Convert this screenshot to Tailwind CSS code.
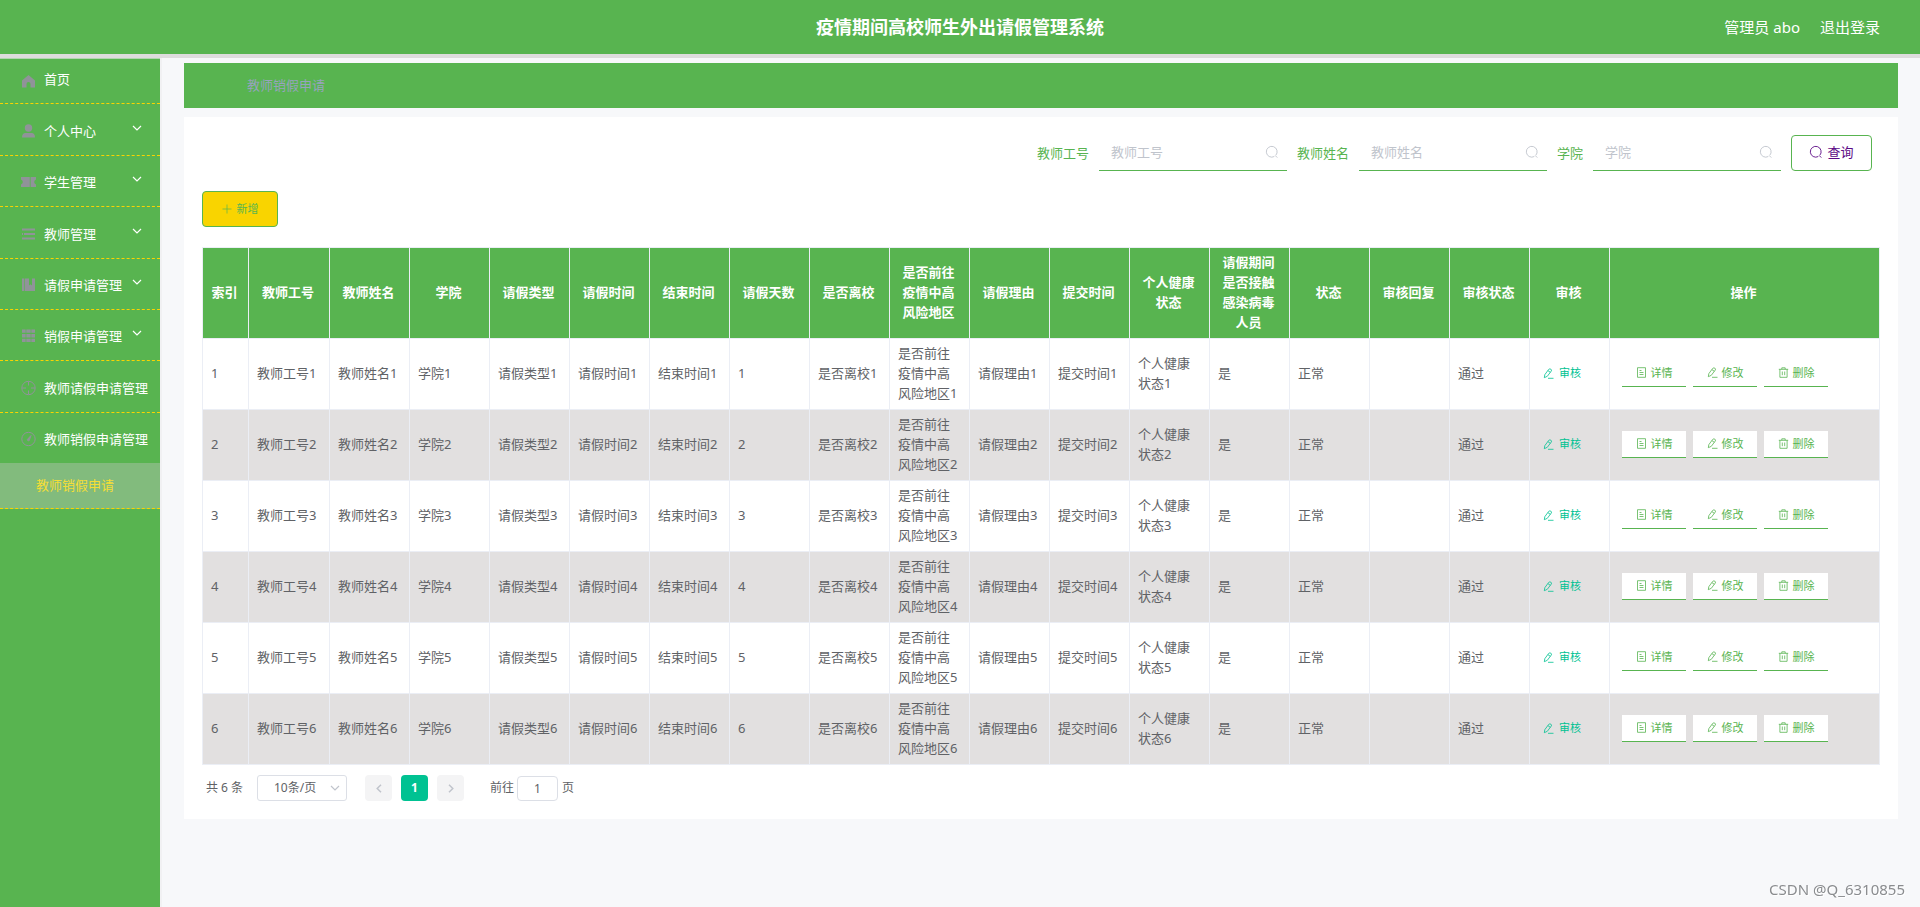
<!DOCTYPE html>
<html lang="zh-CN">
<head>
<meta charset="utf-8">
<title>疫情期间高校师生外出请假管理系统</title>
<script src="https://cdn.jsdelivr.net/npm/@tailwindcss/browser@4"></script>
</head>
<body class="flex min-h-screen flex-col bg-[#f7f8fa] font-['Noto_Sans','Noto_Sans_CJK_SC',sans-serif] text-[13px] leading-5 text-[#606266]">

<svg class="hidden" aria-hidden="true">
  <symbol id="i-search" viewBox="0 0 14 14"><path d="M9.300 11.500A5.400 5.400 0 1 1 10.800 10.300M10.300 10.600l2 2" fill="none" stroke="currentColor" stroke-width=".9"/></symbol>
  <symbol id="i-down" viewBox="0 0 10 6"><path d="M1 1l4 4 4-4" fill="none" stroke="currentColor" stroke-width="1.200"/></symbol>
  <symbol id="i-plus" viewBox="0 0 10 10"><path d="M5 .5v9M.5 5h9" fill="none" stroke="currentColor" stroke-width=".7"/></symbol>
  <symbol id="i-edit" viewBox="0 0 11 11"><path d="M1.300 9.700l.5-3L5.700 1.400Q6.800.4 7.900 1.200T8.300 3L4.300 8.300zM4.900 2.600l2.400 1.700M5 10.300h5.500" fill="none" stroke="currentColor" stroke-width=".8"/></symbol>
  <symbol id="i-doc" viewBox="0 0 11 11"><path d="M1.500.7h8v9.600h-8zM3.500 3.500h2M3.500 5.500h4M3.500 7.500h4" fill="none" stroke="currentColor" stroke-width=".8"/></symbol>
  <symbol id="i-trash" viewBox="0 0 11 11"><path d="M.8 2.300h9.400M3.800 2.300V.8h3.400v1.500M1.900 2.300v8h7.200v-8M4.300 4.500v3.700M6.700 4.500v3.700" fill="none" stroke="currentColor" stroke-width=".8"/></symbol>
</svg>

<header class="grid h-[58px] grid-cols-[1fr_auto_1fr] items-center border-b-4 border-[#dedcdd] bg-[#58b450] text-white">
  <h1 class="col-start-2 text-lg font-bold">疫情期间高校师生外出请假管理系统</h1>
  <div class="flex justify-end gap-5 pr-10 text-[15px]">
    <span>管理员 abo</span>
    <a href="#">退出登录</a>
  </div>
</header>

<div class="flex flex-1">
  <aside class="w-40 shrink-0 border-t border-[#b3d6b0] bg-[#58b450] text-white shadow-[2px_0_0_#f1f1f3]">
    <nav>
      <a href="#" class="flex h-[45px] items-center gap-2 border-b border-dashed border-[#f9d400] pl-[21px]">
        <svg class="h-4 w-[15px] text-[#909399]" viewBox="0 0 15 15" fill="currentColor"><path d="M7.500 1.500L14 7v7H9.500v-3.500a2 2 0 0 0-4 0V14H1V7z"/></svg><span class="pb-1">首页</span></a>
      <a href="#" class="flex h-[52px] items-center gap-2 border-b border-dashed border-[#f9d400] pt-[2px] pl-[21px] pr-[18px]">
        <svg class="h-4 w-[15px] text-[#909399]" viewBox="0 0 15 15" fill="currentColor"><circle cx="7.500" cy="4.500" r="3.700"/><path d="M1 14q0-4.500 3.500-4.500h6Q14 9.500 14 14z"/></svg><span class="flex-1">个人中心</span><svg class="mb-[6px] h-[6px] w-[10px]"><use href="#i-down"/></svg></a>
      <a href="#" class="flex h-[51px] items-center gap-2 border-b border-dashed border-[#f9d400] pt-[2px] pl-[21px] pr-[18px]">
        <svg class="h-4 w-[15px] text-[#909399]" viewBox="0 0 15 15" fill="currentColor"><path d="M0 2.500h8.800v10H0V10q1.800-.6 1.800-2.500T0 5zM9.600 2.500H15V5q-1.800.6-1.800 2.500T15 10v2.500H9.600z"/></svg><span class="flex-1">学生管理</span><svg class="mb-[6px] h-[6px] w-[10px]"><use href="#i-down"/></svg></a>
      <a href="#" class="flex h-[52px] items-center gap-2 border-b border-dashed border-[#f9d400] pt-[2px] pl-[21px] pr-[18px]">
        <svg class="h-4 w-[15px] text-[#909399]" viewBox="0 0 15 15" fill="none" stroke="currentColor" stroke-width="1.800"><path d="M1 3h13M3 7.500h11M1 12h13M1 7.500h1"/></svg><span class="flex-1">教师管理</span><svg class="mb-[6px] h-[6px] w-[10px]"><use href="#i-down"/></svg></a>
      <a href="#" class="flex h-[51px] items-center gap-2 border-b border-dashed border-[#f9d400] pt-[2px] pl-[21px] pr-[18px]">
        <svg class="h-4 w-[15px] text-[#909399]" viewBox="0 0 15 15" fill="currentColor"><path d="M1 1h2v12.500H1zM3.600 1h4.400v7l1.500-1.300L11 8V1h3v12.500H3.600z"/></svg><span class="flex-1">请假申请管理</span><svg class="mb-[6px] h-[6px] w-[10px]"><use href="#i-down"/></svg></a>
      <a href="#" class="flex h-[51px] items-center gap-2 border-b border-dashed border-[#f9d400] pt-[2px] pl-[21px] pr-[18px]">
        <svg class="h-4 w-[15px] text-[#909399]" viewBox="0 0 15 15" fill="currentColor"><path d="M1 1h3.700v3.300H1zM5.300 1h4.400v3.300H5.300zM10.300 1H14v3.300h-3.700zM1 5.500h3.700v3.500H1zM5.300 5.500h4.400v3.500H5.300zM10.300 5.500H14v3.500h-3.700zM1 10.200h3.700v3.300H1zM5.300 10.200h4.400v3.300H5.300zM10.300 10.200H14v3.300h-3.700z"/></svg><span class="flex-1">销假申请管理</span><svg class="mb-[6px] h-[6px] w-[10px]"><use href="#i-down"/></svg></a>
      <a href="#" class="flex h-[52px] items-center gap-2 border-b border-dashed border-[#f9d400] pt-[2px] pl-[21px]">
        <svg class="h-4 w-[15px] text-[#909399]" viewBox="0 0 15 15" fill="none" stroke="currentColor"><circle cx="7.500" cy="7.500" r="6.700"/><path d="M7.500 1v4M7.500 10v4M1 7.500h4M10 7.500h4"/></svg>教师请假申请管理</a>
      <a href="#" class="flex h-[50px] items-center gap-2 pt-[2px] pl-[21px]">
        <svg class="h-4 w-[15px] text-[#909399]" viewBox="0 0 15 15" fill="none" stroke="currentColor"><circle cx="7.500" cy="7.500" r="6.700"/><path d="M10 4L8.300 9a1.200 1.200 0 0 1-2-1z" fill="currentColor"/></svg>教师销假申请管理</a>
      <a href="#" class="flex h-[46px] items-center border-b border-dashed border-[#f9d400] bg-[#82bb7d] pb-[2px] pl-9 text-[#f5de35]">教师销假申请</a>
    </nav>
  </aside>

  <main class="min-w-0 flex-1 pt-[5px] pr-[22px] pl-6">
    <div class="flex h-[45px] items-center bg-[#58b450] pb-[2px] pl-[63px] text-[#97a3be]">教师销假申请</div>

    <section class="mt-[9px] bg-white px-[18px] pt-[18px] pb-[18px]">
      <form class="flex items-center justify-end gap-[10px] pr-2 text-[#58b450]">
        <label for="q1">教师工号</label>
        <div class="relative w-[188px]"><input id="q1" placeholder="教师工号" class="block h-9 w-full border-b border-[#58b450] pr-8 pb-[2px] pl-3 placeholder:text-[#c0c4cc]"><svg class="absolute top-[10px] right-2 size-[14px] text-[#c0c4cc]"><use href="#i-search"/></svg></div>
        <label for="q2">教师姓名</label>
        <div class="relative w-[188px]"><input id="q2" placeholder="教师姓名" class="block h-9 w-full border-b border-[#58b450] pr-8 pb-[2px] pl-3 placeholder:text-[#c0c4cc]"><svg class="absolute top-[10px] right-2 size-[14px] text-[#c0c4cc]"><use href="#i-search"/></svg></div>
        <label for="q3">学院</label>
        <div class="relative w-[188px]"><input id="q3" placeholder="学院" class="block h-9 w-full border-b border-[#58b450] pr-8 pb-[2px] pl-3 placeholder:text-[#c0c4cc]"><svg class="absolute top-[10px] right-2 size-[14px] text-[#c0c4cc]"><use href="#i-search"/></svg></div>
        <button type="button" class="flex h-9 w-[81px] items-center justify-center gap-1 rounded border border-[#58b450] pb-[2px] text-[#5c0a86]"><svg class="size-[14px]"><use href="#i-search"/></svg>查询</button>
      </form>

      <button type="button" class="mt-5 flex h-9 w-[76px] items-center justify-center gap-[5px] rounded border border-[#58b450] bg-[#f9d400] text-[11px] text-[#58b450]"><svg class="size-[10px]"><use href="#i-plus"/></svg>新增</button>

      <table class="mt-5 w-full table-fixed border-separate border-spacing-0 border-t border-l border-[#ebeef5]">
        <colgroup><col class="w-[46px]"><col class="w-[81px]"><col class="w-20" span="16"><col class="w-[270px]"></colgroup>
        <thead><tr id="head" class="bg-[#58b450] text-white"></tr></thead>
        <tbody id="rows"></tbody>
      </table>

      <div class="flex items-center pt-[10px] pl-1 text-xs">
        <span class="w-[51px]">共 6 条</span>
        <div class="relative">
          <select aria-label="每页条数" class="block h-[26px] w-[90px] appearance-none rounded-[3px] border border-[#dcdfe6] bg-white pl-4"><option>10条/页</option></select>
          <svg class="pointer-events-none absolute top-[10px] right-[7px] h-[6px] w-[10px] text-[#c0c4cc]"><use href="#i-down"/></svg>
        </div>
        <button type="button" aria-label="上一页" class="ml-[18px] flex h-[26px] w-[27px] items-center justify-center rounded-sm bg-[#f4f4f5] text-[#c0c4cc]"><svg class="h-[9px] w-[6px]" viewBox="0 0 6 9"><path d="M5 .7L1.200 4.500 5 8.300" fill="none" stroke="currentColor" stroke-width="1.500"/></svg></button>
        <button type="button" class="ml-[9px] h-[26px] w-[27px] rounded-sm bg-[#00c292] font-bold text-white">1</button>
        <button type="button" aria-label="下一页" class="ml-[9px] flex h-[26px] w-[27px] items-center justify-center rounded-sm bg-[#f4f4f5] text-[#c0c4cc]"><svg class="h-[9px] w-[6px]" viewBox="0 0 6 9"><path d="M1 .7l3.800 3.800L1 8.300" fill="none" stroke="currentColor" stroke-width="1.500"/></svg></button>
        <label for="page" class="ml-[26px]">前往</label>
        <input id="page" value="1" class="mr-1 ml-[3px] h-[25px] w-[41px] rounded border border-[#dcdfe6] text-center">
        <span>页</span>
      </div>
    </section>
  </main>
</div>

<div class="fixed right-[15px] bottom-[6px] text-[15px] leading-6 text-[#8a8c8f] [text-shadow:1px_1px_0_#ffffff]">CSDN @Q_6310855</div>

<script>
const heads = ['索引','教师工号','教师姓名','学院','请假类型','请假时间','结束时间','请假天数','是否离校','是否前往疫情中高风险地区','请假理由','提交时间','个人健康状态','请假期间是否接触感染病毒人员','状态','审核回复','审核状态','审核','操作'];
document.getElementById('head').innerHTML = heads.map(h =>
  `<th class="border-r border-b border-[#ebeef5] pt-1 pr-[9px] pb-[6px] pl-[7px] font-bold">${h}</th>`).join('');

const action = (icon, text) =>
  `<button type="button" class="flex h-[27px] w-16 items-center justify-center gap-1 border-b border-[#58b450] bg-white text-[11px] text-[#58b450]"><svg class="size-[11px]"><use href="#${icon}"/></svg>${text}</button>`;

let html = '';
for (let n = 1; n <= 6; n++) {
  const cells = [n, '教师工号'+n, '教师姓名'+n, '学院'+n, '请假类型'+n, '请假时间'+n, '结束时间'+n, n, '是否离校'+n,
    '是否前往疫情中高风险地区'+n, '请假理由'+n, '提交时间'+n, '个人健康状态'+n, '是', '正常', '', '通过'];
  html += '<tr class="even:bg-[#e2e0e0]">' +
    cells.map(c => `<td class="border-r border-b border-[#ebeef5] px-2 pt-1 pb-[6px]">${c}</td>`).join('') +
    `<td class="border-r border-b border-[#ebeef5] px-[13px] pb-[2px]"><button type="button" class="flex items-center gap-[5px] text-[11px] text-[#00c292]"><svg class="size-[11px]"><use href="#i-edit"/></svg>审核</button></td>` +
    `<td class="border-r border-b border-[#ebeef5] px-3 pb-[2px]"><div class="flex gap-[7px]">${action('i-doc','详情')}${action('i-edit','修改')}${action('i-trash','删除')}</div></td></tr>`;
}
document.getElementById('rows').innerHTML = html;
</script>
</body>
</html>
